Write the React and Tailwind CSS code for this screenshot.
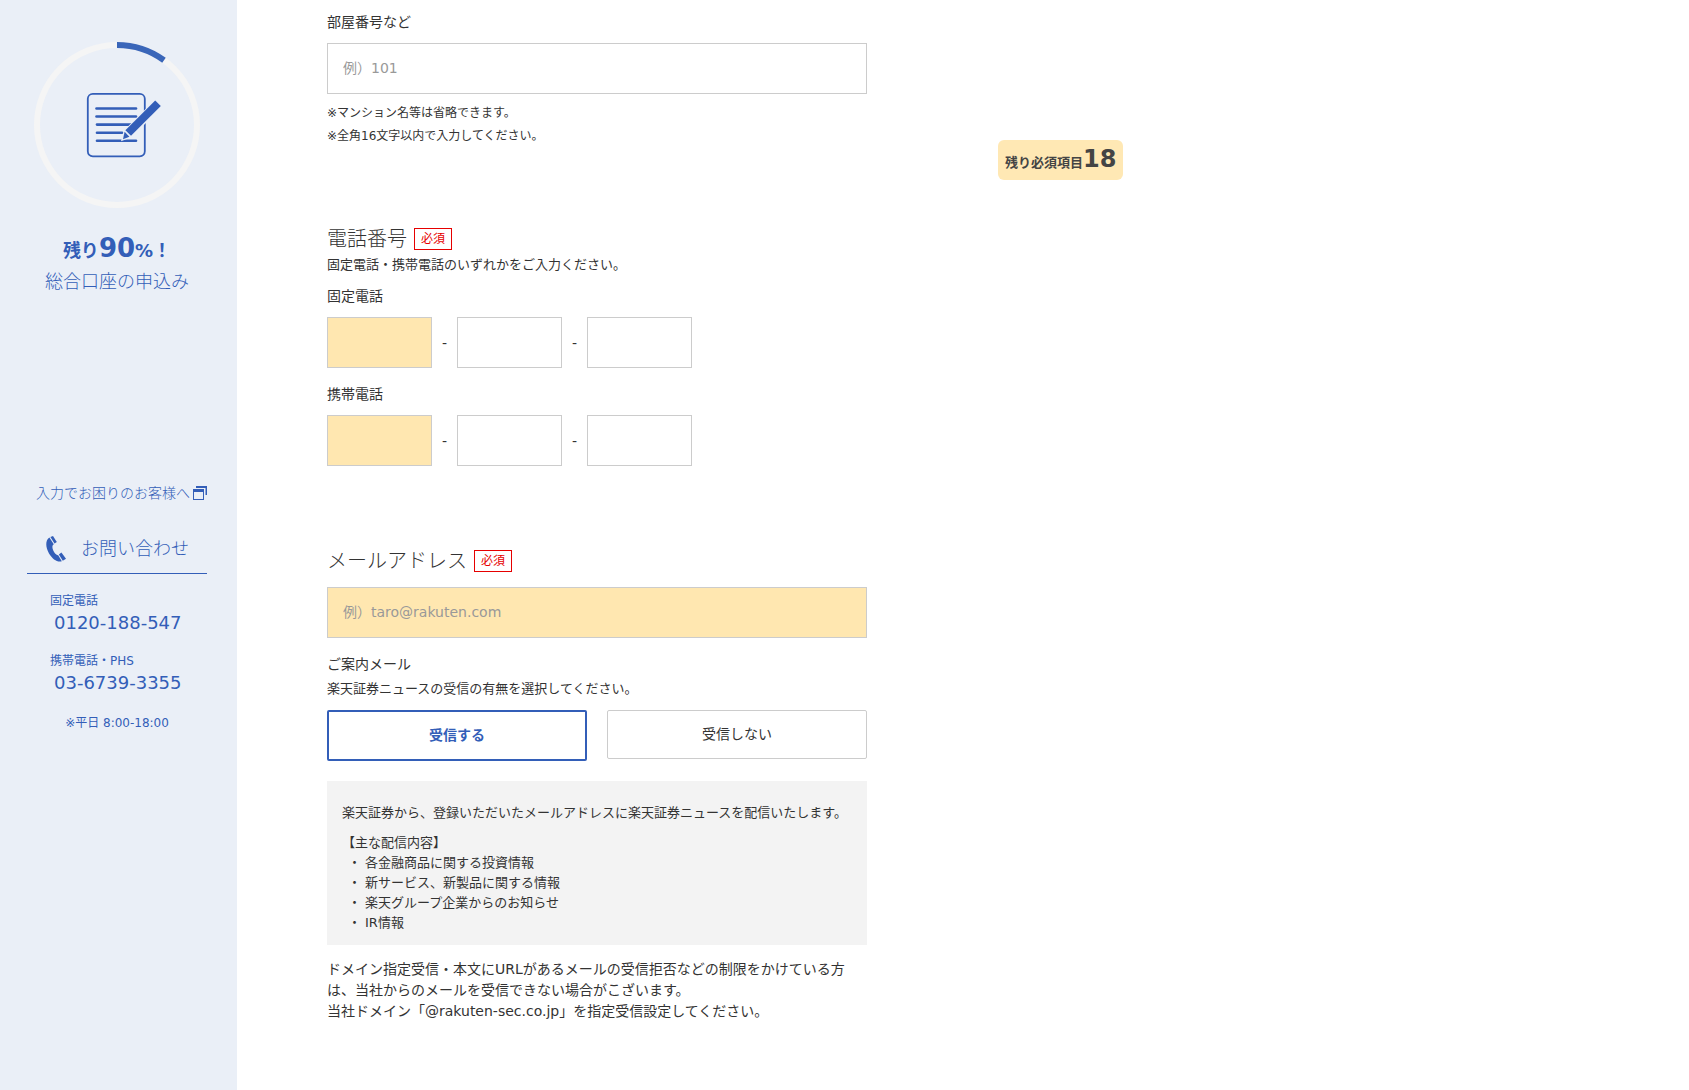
import React, { useState } from 'react';

const TEL_ROWS = [
    { id: 'home', label: '固定電話' },
    { id: 'mobile', label: '携帯電話' },
];

const NEWS_ITEMS = [
    '各金融商品に関する投資情報',
    '新サービス、新製品に関する情報',
    '楽天グループ企業からのお知らせ',
    'IR情報',
];

function ProgressCircle() {
    return (
        <svg viewBox="0 0 166 166" className="w-[166px] h-[166px]" fill="none" aria-hidden="true">
            <circle cx="83" cy="83" r="80" stroke="#f5f5f5" strokeWidth="6" />
            <path d="M83 3 A80 80 0 0 1 130 18.3" stroke="#3a66b9" strokeWidth="6" />
            <rect x="53.8" y="51.8" width="57" height="62.5" rx="5" stroke="#335eb8" strokeWidth="1.8" />
            <g stroke="#335eb8" strokeWidth="2.6" strokeLinecap="round">
                <path d="M62.5 66.5H102" />
                <path d="M62.5 74.5H102" />
                <path d="M63 82.6H97" />
                <path d="M63 90.7H88" />
                <path d="M63 98.7H102" />
            </g>
            <path d="M121.4 59 L126.8 64.4 L97 94.2 L88.8 97.2 L91.4 88.6 Z" fill="#eaeff7" stroke="#eaeff7" strokeWidth="2.4" />
            <path d="M121.2 58.4 L126.8 64 L97 93.8 L91.4 88.2 Z" fill="#335eb8" />
            <path d="M90.6 89.8 L95.4 94.7 L89 97.2 Z" fill="#335eb8" />
        </svg>
    );
}

function WindowIcon() {
    return (
        <svg viewBox="0 0 14 14" className="w-3.5 h-3.5" fill="currentColor" aria-hidden="true">
            <path d="M3 0H14V9H12.5V2H3Z" />
            <path fillRule="evenodd" d="M0 3H11V14H0ZM1 6V13H10V6Z" />
        </svg>
    );
}

function PhoneIcon() {
    return (
        <svg viewBox="0 0 20 26" className="w-5 h-[26px]" fill="currentColor" aria-hidden="true">
            <path d="M3.4 1.6C-1 4.5 -0.4 11.5 3 17.4C6.6 23.2 11 26.3 15.8 25.2L12.2 19.2C9.6 19.4 6.4 14 6.4 11C6.4 9.6 7 8.8 7.8 8.2Z" />
            <path d="M4.4 0.9L7 0L10.8 6L8.5 7.6Z" />
            <path d="M12.9 18.6L15.4 16.6L20 22.8L16.8 24.7Z" />
        </svg>
    );
}

function RequiredBadge() {
    return (
        <span className="h-[22px] px-1.5 border border-[#e60000] text-[#e60000] text-xs leading-5">必須</span>
    );
}

export default function App() {
    const [receiveNews, setReceiveNews] = useState(true);

    return (
        <div className="flex items-stretch min-h-screen bg-white text-[#333] text-sm leading-5 font-['DejaVu_Sans','Noto_Sans_CJK_JP',sans-serif]">
            <aside className="w-[237px] shrink-0 bg-[#eaeff7] text-[#335eb8] pt-[42px]">
                <div className="flex flex-col items-center pr-[3px]">
                    <ProgressCircle />
                    <p className="mt-[25px] text-lg leading-[31px] font-bold">
                        残り<span className="text-[26px]">90</span>%！
                    </p>
                    <p className="text-lg leading-[31px] font-light">総合口座の申込み</p>
                </div>

                <a href="#help" className="mt-[186px] ml-9 flex items-center gap-[3px] font-light">
                    入力でお困りのお客様へ
                    <WindowIcon />
                </a>

                <div className="mt-8 ml-[27px] mr-[30px] pb-2.5 pl-[19px] flex items-center gap-[15px] border-b border-[#335eb8]">
                    <PhoneIcon />
                    <h2 className="text-lg leading-7 font-light">お問い合わせ</h2>
                </div>
                <dl className="mt-[17px] ml-[50px]">
                    <dt className="text-xs leading-5">固定電話</dt>
                    <dd className="pl-1 text-lg leading-6">0120-188-547</dd>
                    <dt className="mt-4 text-xs leading-5">携帯電話・PHS</dt>
                    <dd className="pl-1 text-lg leading-6">03-6739-3355</dd>
                </dl>
                <p className="mt-4 pr-[3px] text-center text-xs leading-6">※平日 8:00-18:00</p>
            </aside>

            <main className="ml-[90px] w-[540px] pt-3">
                <section>
                    <label htmlFor="room" className="block">部屋番号など</label>
                    <input
                        id="room"
                        type="text"
                        placeholder="例）101"
                        className="mt-[11px] block w-full h-[51px] px-[15px] pb-0.5 border border-[#ccc] placeholder:text-[#999]"
                    />
                    <div className="mt-2 text-xs leading-[23px]">
                        <p>※マンション名等は省略できます。</p>
                        <p>※全角16文字以内で入力してください。</p>
                    </div>
                </section>

                <section className="mt-[77px]">
                    <div className="flex items-center gap-[7px]">
                        <h2 className="text-xl leading-7 font-light">電話番号</h2>
                        <RequiredBadge />
                    </div>
                    <p className="mt-0.5 text-[13px]">固定電話・携帯電話のいずれかをご入力ください。</p>
                    {TEL_ROWS.map((row) => (
                        <fieldset key={row.id} className="mt-[11px] mb-4">
                            <legend>{row.label}</legend>
                            <div className="mt-[11px] flex items-center">
                                <input
                                    type="tel"
                                    aria-label={`${row.label} 1`}
                                    className="w-[105px] h-[51px] px-[15px] border border-[#ccc] bg-[#ffe7b0]"
                                />
                                <span className="w-[25px] text-center">-</span>
                                <input
                                    type="tel"
                                    aria-label={`${row.label} 2`}
                                    className="w-[105px] h-[51px] px-[15px] border border-[#ccc]"
                                />
                                <span className="w-[25px] text-center">-</span>
                                <input
                                    type="tel"
                                    aria-label={`${row.label} 3`}
                                    className="w-[105px] h-[51px] px-[15px] border border-[#ccc]"
                                />
                            </div>
                        </fieldset>
                    ))}
                </section>

                <section className="mt-[81px]">
                    <div className="flex items-center gap-[7px]">
                        <h2 className="text-xl leading-7 font-light">
                            <label htmlFor="email">メールアドレス</label>
                        </h2>
                        <RequiredBadge />
                    </div>
                    <input
                        id="email"
                        type="email"
                        placeholder="例）taro@rakuten.com"
                        className="mt-3 block w-full h-[51px] px-[15px] pb-0.5 border border-[#ccc] bg-[#ffe7b0] placeholder:text-[#999]"
                    />

                    <h3 className="mt-4">ご案内メール</h3>
                    <p className="mt-[5px] text-[13px]">楽天証券ニュースの受信の有無を選択してください。</p>
                    <div className="mt-[11px] grid grid-cols-2 gap-5 items-start">
                        <label
                            className={`flex items-center justify-center pb-0.5 rounded-xs cursor-pointer ${
                                receiveNews ? 'h-[51px] border-2 border-[#335eb8] text-[#335eb8] font-bold' : 'h-[49px] border border-[#ccc]'
                            }`}
                        >
                            <input
                                type="radio"
                                name="news"
                                className="sr-only"
                                checked={receiveNews}
                                onChange={() => setReceiveNews(true)}
                            />
                            受信する
                        </label>
                        <label
                            className={`flex items-center justify-center pb-0.5 rounded-xs cursor-pointer ${
                                !receiveNews ? 'h-[51px] border-2 border-[#335eb8] text-[#335eb8] font-bold' : 'h-[49px] border border-[#ccc]'
                            }`}
                        >
                            <input
                                type="radio"
                                name="news"
                                className="sr-only"
                                checked={!receiveNews}
                                onChange={() => setReceiveNews(false)}
                            />
                            受信しない
                        </label>
                    </div>

                    <div className="mt-5 px-[15px] pt-[22px] pb-3 bg-[#f3f3f3] text-[13px]">
                        <p>楽天証券から、登録いただいたメールアドレスに楽天証券ニュースを配信いたします。</p>
                        <p className="mt-2.5">【主な配信内容】</p>
                        <ul className="pl-1.5">
                            {NEWS_ITEMS.map((item) => (
                                <li key={item} className="flex gap-1">
                                    <span>・</span>
                                    {item}
                                </li>
                            ))}
                        </ul>
                    </div>

                    <p className="mt-3.5 leading-[21px]">
                        ドメイン指定受信・本文にURLがあるメールの受信拒否などの制限をかけている方は、当社からのメールを受信できない場合がこざいます。
                        <br />
                        当社ドメイン「@rakuten-sec.co.jp」を指定受信設定してください。
                    </p>
                </section>
            </main>

            <p className="mt-[140px] ml-[131px] self-start h-10 px-[7px] rounded-md bg-[#ffe8b4] text-[#444] text-[13px] leading-[38px] font-bold whitespace-nowrap">
                残り必須項目<span className="text-2xl leading-[38px]">18</span>
            </p>
        </div>
    );
}
